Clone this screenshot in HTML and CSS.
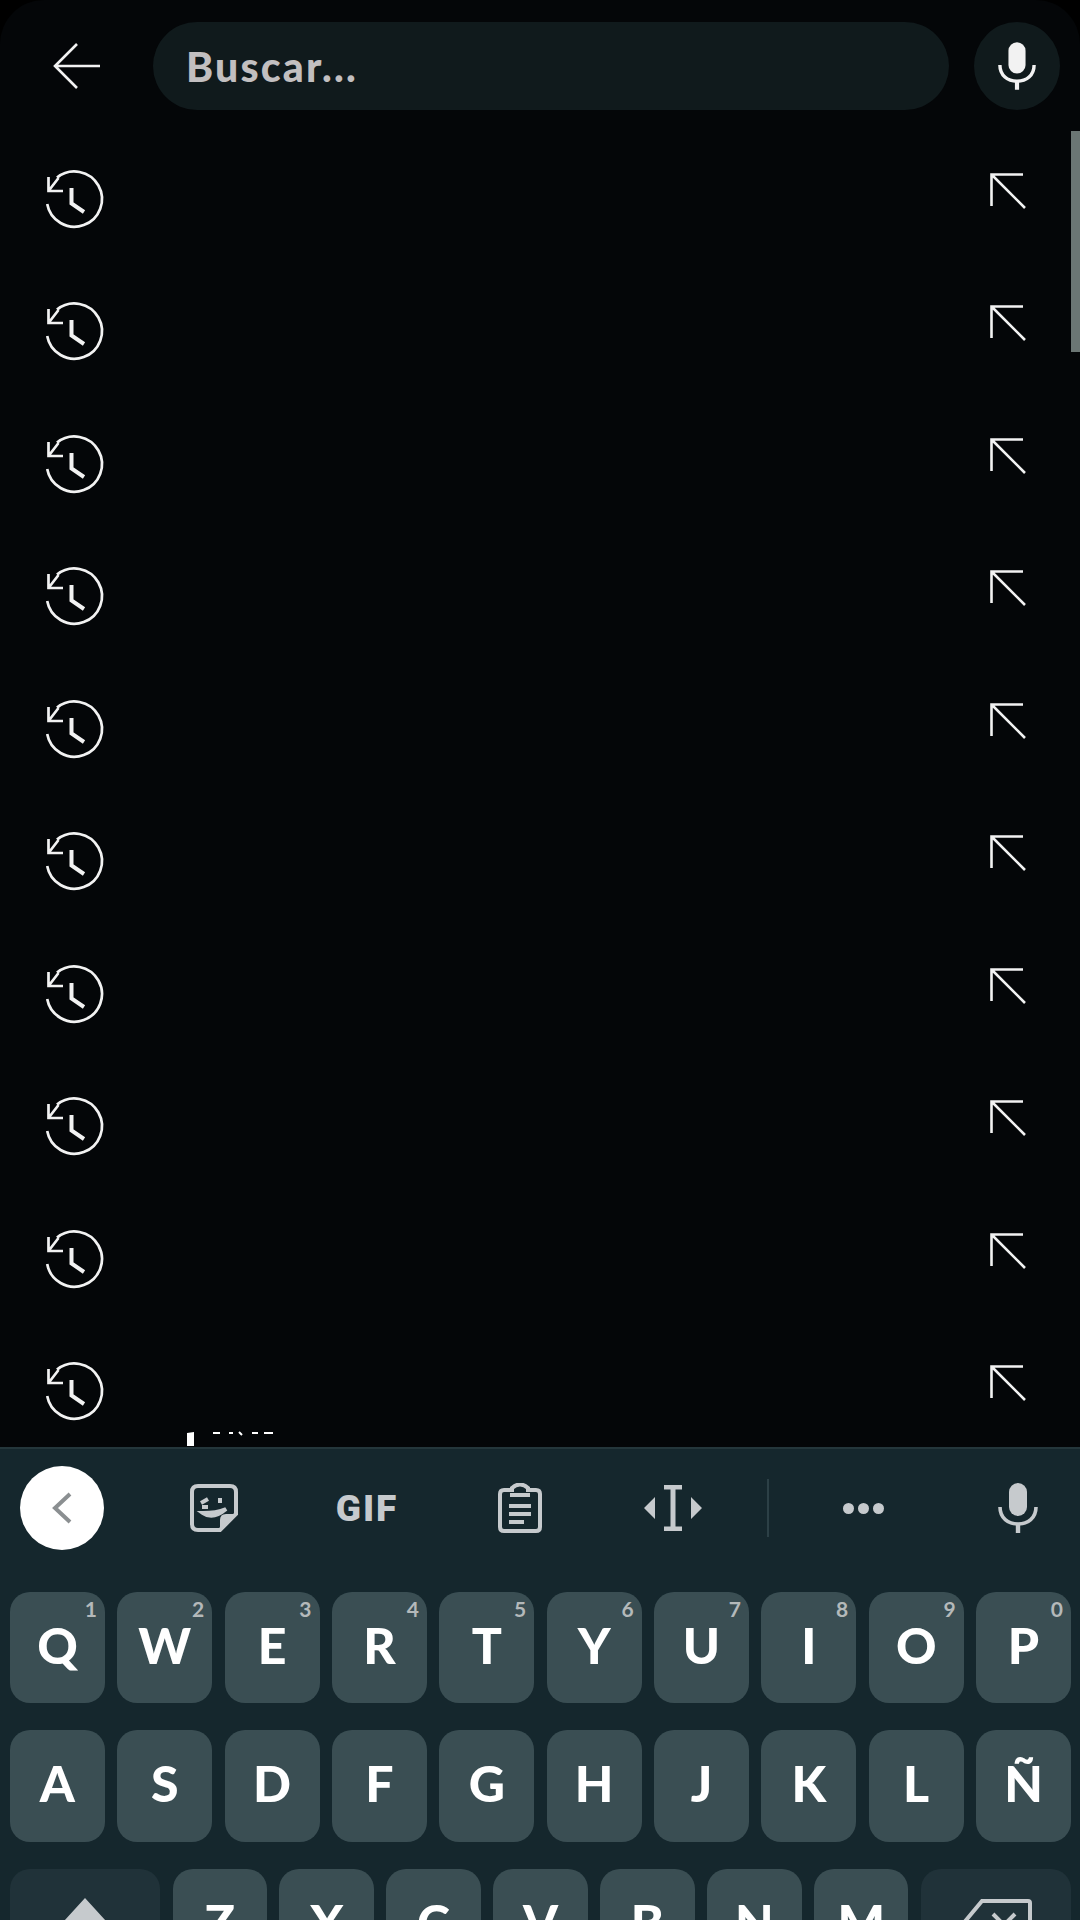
FILE: index.html
```html
<!DOCTYPE html>
<html lang="es">
<head>
  <meta charset="UTF-8" />
  <title>Buscar</title>
  <link rel="stylesheet" href="styles.css">
</head>
<body>
  <svg class="defs" width="0" height="0">
    <symbol id="i-history" viewBox="0 0 90 80">
      <path d="M27 15.6A27.6 27.6 0 1 1 17.2 42" fill="none" stroke="currentColor" stroke-width="2.7"/>
      <path d="M18.5 15V29H33M18.5 29L28.5 16" fill="none" stroke="currentColor" stroke-width="2.7"/>
      <path d="M41.5 26V41.5L54 50" fill="none" stroke="currentColor" stroke-width="4"/>
    </symbol>
    <symbol id="i-nw" viewBox="0 0 36 36">
      <path d="M1.5 33V1.5H33M1.5 1.5L35 35" fill="none" stroke="currentColor" stroke-width="2.6"/>
    </symbol>
    <symbol id="i-mic" viewBox="0 0 40 50">
      <rect x="11" y="0" width="18" height="33" rx="9" fill="currentColor"/>
      <path d="M2 24C2 35 10 41 20 41S38 35 38 24" fill="none" stroke="currentColor" stroke-width="3.6"/>
      <path d="M20 41V50" fill="none" stroke="currentColor" stroke-width="4.4"/>
    </symbol>
  </svg>

  <div class="screen">
    <header class="search-bar">
      <svg class="back" width="48" height="46" viewBox="0 0 48 46">
        <path d="M47 23H3M24 1L2 23L24 45" fill="none" stroke="currentColor" stroke-width="2.6"/>
      </svg>
      <div class="search-input">Buscar...</div>
      <div class="voice-btn"><svg width="38" height="50"><use href="#i-mic"/></svg></div>
    </header>

    <main class="history">
      <div class="history-row"><svg class="clock" width="90" height="80"><use href="#i-history"/></svg><svg class="fill" width="36" height="36"><use href="#i-nw"/></svg></div>
      <div class="history-row"><svg class="clock" width="90" height="80"><use href="#i-history"/></svg><svg class="fill" width="36" height="36"><use href="#i-nw"/></svg></div>
      <div class="history-row"><svg class="clock" width="90" height="80"><use href="#i-history"/></svg><svg class="fill" width="36" height="36"><use href="#i-nw"/></svg></div>
      <div class="history-row"><svg class="clock" width="90" height="80"><use href="#i-history"/></svg><svg class="fill" width="36" height="36"><use href="#i-nw"/></svg></div>
      <div class="history-row"><svg class="clock" width="90" height="80"><use href="#i-history"/></svg><svg class="fill" width="36" height="36"><use href="#i-nw"/></svg></div>
      <div class="history-row"><svg class="clock" width="90" height="80"><use href="#i-history"/></svg><svg class="fill" width="36" height="36"><use href="#i-nw"/></svg></div>
      <div class="history-row"><svg class="clock" width="90" height="80"><use href="#i-history"/></svg><svg class="fill" width="36" height="36"><use href="#i-nw"/></svg></div>
      <div class="history-row"><svg class="clock" width="90" height="80"><use href="#i-history"/></svg><svg class="fill" width="36" height="36"><use href="#i-nw"/></svg></div>
      <div class="history-row"><svg class="clock" width="90" height="80"><use href="#i-history"/></svg><svg class="fill" width="36" height="36"><use href="#i-nw"/></svg></div>
      <div class="history-row"><svg class="clock" width="90" height="80"><use href="#i-history"/></svg><svg class="fill" width="36" height="36"><use href="#i-nw"/></svg></div>
      <div class="scroll-thumb"></div>
      <!-- tops of the next line, cut off by the keyboard -->
      <svg class="peek" width="90" height="16" viewBox="0 0 90 16">
        <path d="M1 3L8 2V16H1Z" fill="#fff"/>
        <path d="M27 3H34M43 3H47M53 2L56 5M66 3H72M78 3H87" fill="none" stroke="#fff" stroke-width="2"/>
      </svg>
    </main>

    <section class="keyboard">
      <div class="toolbar">
        <div class="collapse-btn">
          <svg width="22" height="32" viewBox="0 0 22 32"><path d="M19 2L4 16L19 30" fill="none" stroke="currentColor" stroke-width="4"/></svg>
        </div>
        <div class="tool">
          <svg width="48" height="48" viewBox="0 0 48 48">
            <path d="M8 2H40Q46 2 46 8V30L30 46H8Q2 46 2 40V8Q2 2 8 2Z" fill="none" stroke="currentColor" stroke-width="4"/>
            <path d="M46 30H36Q30 30 30 36V46Z" fill="currentColor"/>
            <path d="M11 19L18 15M12 23H18M30 14V19M13 29Q23 36 36 25Q26 29 13 29Z" fill="none" stroke="currentColor" stroke-width="4"/>
          </svg>
        </div>
        <div class="tool gif">GIF</div>
        <div class="tool">
          <svg width="44" height="50" viewBox="0 0 44 50">
            <path d="M6 7H14V5Q22 -2 30 5V7H38Q42 7 42 11V44Q42 48 38 48H6Q2 48 2 44V11Q2 7 6 7Z" fill="none" stroke="currentColor" stroke-width="4"/>
            <path d="M12 10H32V14H12Z" fill="currentColor"/>
            <path d="M11 23H33M11 31H33M11 39H26" fill="none" stroke="currentColor" stroke-width="4"/>
          </svg>
        </div>
        <div class="tool">
          <svg width="58" height="46" viewBox="0 0 58 46">
            <path d="M20 2H38M20 44H38M29 2V44" fill="none" stroke="currentColor" stroke-width="5"/>
            <path d="M0 23L11 12V34ZM58 23L47 12V34Z" fill="currentColor"/>
          </svg>
        </div>
        <div class="tool-divider"><span></span></div>
        <div class="tool dots"><span></span><span></span><span></span></div>
        <div class="tool-mic"><svg width="40" height="52"><use href="#i-mic"/></svg></div>
      </div>

      <div class="key-rows">
        <div class="key-row">
          <div class="key">Q<span class="hint">1</span></div>
          <div class="key">W<span class="hint">2</span></div>
          <div class="key">E<span class="hint">3</span></div>
          <div class="key">R<span class="hint">4</span></div>
          <div class="key">T<span class="hint">5</span></div>
          <div class="key">Y<span class="hint">6</span></div>
          <div class="key">U<span class="hint">7</span></div>
          <div class="key">I<span class="hint">8</span></div>
          <div class="key">O<span class="hint">9</span></div>
          <div class="key">P<span class="hint">0</span></div>
        </div>
        <div class="key-row">
          <div class="key">A</div>
          <div class="key">S</div>
          <div class="key">D</div>
          <div class="key">F</div>
          <div class="key">G</div>
          <div class="key">H</div>
          <div class="key">J</div>
          <div class="key">K</div>
          <div class="key">L</div>
          <div class="key">Ñ</div>
        </div>
        <div class="key-row">
          <div class="key key-wide">
            <svg width="62" height="54" viewBox="0 0 62 54"><path d="M31 0L62 34H46V54H16V34H0Z" fill="currentColor"/></svg>
          </div>
          <div class="key">Z</div>
          <div class="key">X</div>
          <div class="key">C</div>
          <div class="key">V</div>
          <div class="key">B</div>
          <div class="key">N</div>
          <div class="key">M</div>
          <div class="key key-wide">
            <svg width="72" height="52" viewBox="0 0 72 52"><path d="M22 2H68Q70 2 70 4V48Q70 50 68 50H22L2 26Z" fill="none" stroke="currentColor" stroke-width="4"/><path d="M33 15L55 37M55 15L33 37" fill="none" stroke="currentColor" stroke-width="4"/></svg>
          </div>
        </div>
      </div>
    </section>
  </div>
</body>
</html>
```

FILE: styles.css
```css
/* ---------- base ---------- */
html, body {
  margin: 0;
  padding: 0;
  background: #000;
}
body {
  width: 1080px;
  height: 1920px;
  overflow: hidden;
  font-family: "Lato", "Liberation Sans", sans-serif;
}
.defs {
  position: absolute;
}
.screen {
  height: 1920px;
  display: flex;
  flex-direction: column;
  background: #040608;
  border-radius: 44px 44px 0 0;
  overflow: hidden;
  color: #f2f2f2;
}

/* ---------- search bar ---------- */
.search-bar {
  height: 131px;
  flex: none;
  box-sizing: border-box;
  padding: 22px 20px 21px 53px;
  display: flex;
  align-items: center;
}
.back {
  flex: none;
  margin-right: 52px;
}
.search-input {
  width: 796px;
  height: 88px;
  flex: none;
  box-sizing: border-box;
  padding-left: 33px;
  display: flex;
  align-items: center;
  background: #101a1c;
  border-radius: 44px;
  color: #c2bfc0;
  font-size: 41px;
  font-weight: 900;
  letter-spacing: 2.2px;
}
.voice-btn {
  width: 86px;
  height: 88px;
  margin-left: auto;
  flex: none;
  display: flex;
  align-items: center;
  justify-content: center;
  background: #101a1c;
  border-radius: 50%;
}

/* ---------- history list ---------- */
.history {
  flex: 1;
  min-height: 0;
  overflow: hidden;
  position: relative;
  padding-top: 4.5px;
}
.history-row {
  height: 132.5px;
  box-sizing: border-box;
  padding: 0 54px 0 30px;
  display: flex;
  justify-content: space-between;
  align-items: center;
}
.history-row .fill {
  margin-bottom: 22px;
}
.scroll-thumb {
  position: absolute;
  top: 0;
  right: 0;
  width: 9px;
  height: 221px;
  background: #6b7674;
}
.peek {
  position: absolute;
  left: 186px;
  bottom: 1px;
}

/* ---------- keyboard ---------- */
.keyboard {
  height: 473px;
  flex: none;
  box-sizing: border-box;
  background: #15272d;
  border-top: 2px solid #24363b;
  color: #c6cacd;
}
.toolbar {
  height: 120.5px;
  display: flex;
  align-items: center;
  padding-left: 20px;
  box-sizing: border-box;
  padding-bottom: 2px;
}
.collapse-btn {
  width: 84px;
  height: 84px;
  margin-right: 33.5px;
  flex: none;
  display: flex;
  align-items: center;
  justify-content: center;
  background: #fff;
  border-radius: 50%;
  color: #8b8f91;
}
.tool {
  width: 153px;
  flex: none;
  display: flex;
  align-items: center;
  justify-content: center;
}
.gif {
  font-family: "Roboto", sans-serif;
  font-size: 37px;
  font-weight: 900;
  letter-spacing: 2px;
}
.tool-divider {
  width: 37px;
  flex: none;
  display: flex;
  justify-content: center;
}
.tool-divider span {
  width: 2px;
  height: 58px;
  background: #2c4046;
}
.dots {
  gap: 4px;
}
.dots span {
  width: 11px;
  height: 11px;
  background: currentColor;
  border-radius: 50%;
}
.tool-mic {
  width: 100px;
  margin-left: 28.5px;
  flex: none;
  display: flex;
  justify-content: center;
}
.key-rows {
  padding: 22px 9px 0 10px;
  display: grid;
  grid-auto-rows: 111.5px;
  row-gap: 27px;
}
.key-row {
  display: flex;
  gap: 12.5px;
}
.key {
  flex: 1 1 0;
  min-width: 0;
  position: relative;
  box-sizing: border-box;
  padding-bottom: 5px;
  display: flex;
  align-items: center;
  justify-content: center;
  background: #3a4e53;
  border-radius: 20px;
  color: #fff;
  font-size: 50px;
  font-weight: 900;
}
.key-wide {
  flex: 0 0 150px;
  background: #203239;
  color: #c6cacd;
  padding-bottom: 0;
  padding-top: 2px;
}
.hint {
  position: absolute;
  top: 4px;
  right: 8px;
  color: #b4b9ba;
  font-size: 21px;
  font-weight: 700;
}
```
